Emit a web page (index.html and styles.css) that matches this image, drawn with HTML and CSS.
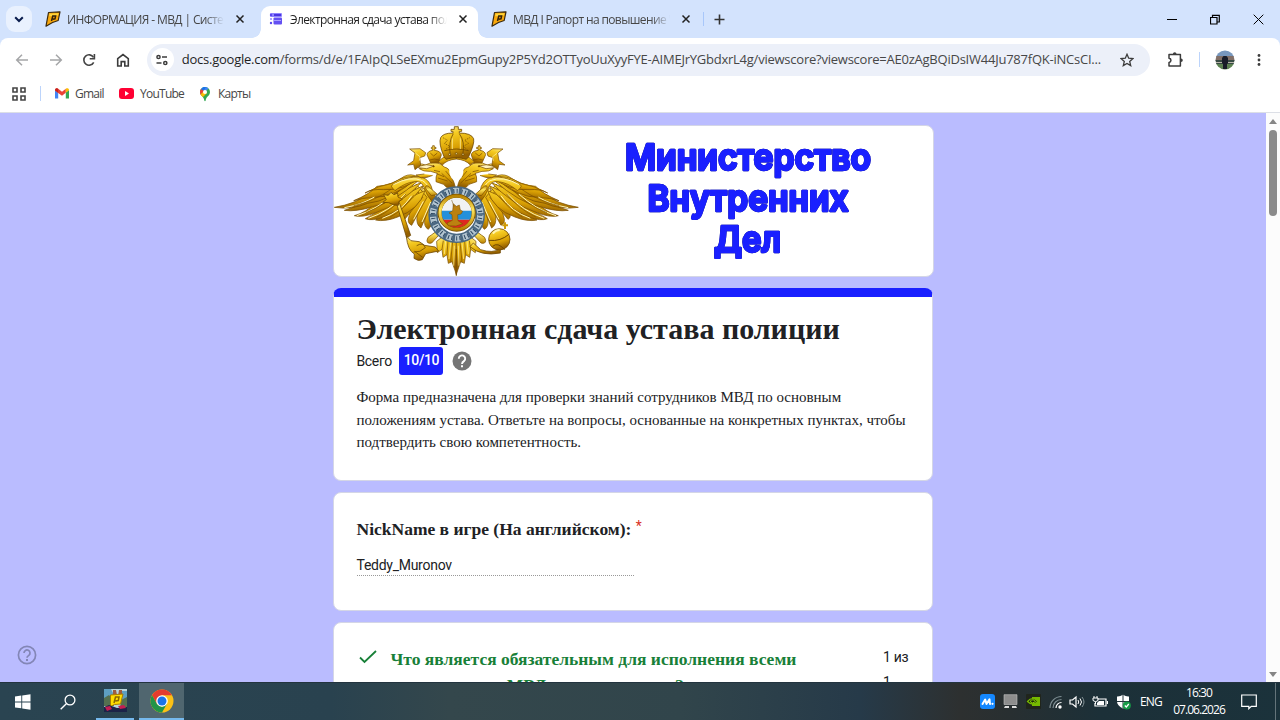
FILE: index.html
```html
<!DOCTYPE html>
<html lang="ru">
<head>
    <meta charset="UTF-8">
    <title>Электронная сдача устава полиции</title>
    <link rel="stylesheet" href="styles.css">
</head>
<body>
    <svg class="defs" width="0" height="0">
        <defs>
            <symbol id="rp" viewBox="0 0 16 16">
                <path d="M3.5 1.5L15 .8 13.2 9.5 7.5 11.5 1 15.2z" fill="#f9a80c" stroke="#3a2a10" stroke-width="1.2" stroke-linejoin="round"/>
                <path d="M4.5 2.8l9-.6-.5 2.2-8.8.8z" fill="#ffd43a"/>
                <path d="M6.500 10L7.800 5h2.800L10 7.800 7.800 8.300" fill="none" stroke="#33220c" stroke-width="1.500"/>
            </symbol>
            <symbol id="x" viewBox="0 0 10 10">
                <path d="M1.5 1.5l7 7M8.5 1.5l-7 7" stroke="currentColor" stroke-width="1.5"/>
            </symbol>
        </defs>
    </svg>

    <!-- Вкладки -->
    <div class="tabs">
        <div class="tab-search"><svg width="10" height="7" viewBox="0 0 10 7"><path d="M1.2 1.2L5 5l3.8-3.8" fill="none" stroke="#0b1d4d" stroke-width="2"/></svg></div>
        <div class="tab tab-first">
            <svg width="16" height="16"><use href="#rp"/></svg>
            <span class="tab-title">ИНФОРМАЦИЯ - МВД | Система</span>
            <svg class="close" width="10" height="10"><use href="#x"/></svg>
        </div>
        <div class="tab active">
            <svg width="14" height="14" viewBox="0 0 14 14">
                <rect x="1" y="1" width="12" height="4" rx="1" fill="#8f84ff"/><rect x="5" y="2" width="7" height="2" fill="#4b35e0"/>
                <rect x="4.500" y="5.500" width="8.500" height="7" rx="1" fill="#6350f2"/><circle cx="2" cy="3" r="1.200" fill="#5b45ee"/>
                <circle cx="2" cy="7" r="1" fill="#8f84ff"/><circle cx="2" cy="11" r="1.200" fill="#5b45ee"/><path d="M5 8.500h7" stroke="#a79fff"/>
            </svg>
            <span class="tab-title">Электронная сдача устава полиции</span>
            <svg class="close" width="10" height="10"><use href="#x"/></svg>
        </div>
        <div class="tab tab-last">
            <svg width="16" height="16"><use href="#rp"/></svg>
            <span class="tab-title">МВД I Рапорт на повышение "М</span>
            <svg class="close" width="10" height="10"><use href="#x"/></svg>
        </div>
        <div class="tab-line"></div>
        <svg class="plus" width="11" height="11" viewBox="0 0 11 11"><path d="M5.500 .5v10M.5 5.500h10" stroke="#333" stroke-width="1.600"/></svg>
        <div class="window-buttons">
            <svg width="10" height="11" viewBox="0 0 10 11"><path d="M0 5.500h10" stroke="#000"/></svg>
            <svg width="10" height="11" viewBox="0 0 10 11"><path d="M.500 3.500h6.500v6.500h-6.500zM2.500 3.500V1.300h6.800V8H7" fill="none" stroke="#000" stroke-width="1.200"/></svg>
            <svg width="11" height="11" viewBox="0 0 11 11"><path d="M.7.7l9.600 9.600M10.300.7L.7 10.300" stroke="#000"/></svg>
        </div>
    </div>

    <!-- Адресная строка -->
    <div class="toolbar-wrap">
        <div class="toolbar">
            <svg class="nav" width="14" height="14" viewBox="0 0 14 14"><path d="M13 7H2M7 1.700L1.700 7 7 12.300" fill="none" stroke="#a5a6a8" stroke-width="1.500"/></svg>
            <svg class="nav" width="14" height="14" viewBox="0 0 14 14"><path d="M1 7h11M7 1.700L12.300 7 7 12.300" fill="none" stroke="#a5a6a8" stroke-width="1.500"/></svg>
            <svg class="nav" width="14" height="14" viewBox="0 0 14 14"><path d="M11.700 9.300A5.200 5.200 0 1 1 11.500 4.300" fill="none" stroke="#444" stroke-width="1.600"/><path d="M12.400 1v4.800H7.700" fill="none" stroke="#444" stroke-width="1.600"/></svg>
            <svg class="nav" width="14" height="14" viewBox="0 0 14 14"><path d="M1.700 13V5.600L7 1.500l5.300 4.100V13H8.800V8.600H5.200V13z" fill="none" stroke="#3c3c3c" stroke-width="1.600"/></svg>
            <div class="address">
                <div class="site-info"><svg width="12" height="12" viewBox="0 0 12 12"><g fill="none" stroke="#3c3c3c" stroke-width="1.500"><circle cx="2.500" cy="3" r="1.600"/><path d="M6 3h5M.5 9h5"/><circle cx="9.300" cy="9" r="1.600"/></g></svg></div>
                <div class="url"><b>docs.google.com</b>/forms/d/e/1FAIpQLSeEXmu2EpmGupy2P5Yd2OTTyoUuXyyFYE-AIMEJrYGbdxrL4g/viewscore?viewscore=AE0zAgBQiDsIW44Ju787fQK-iNCsCI...</div>
                <svg class="star" width="14" height="14" viewBox="0 0 14 14"><path d="M7 1.300l1.700 3.900 4.200.4-3.200 2.800 1 4.200L7 10.400l-3.700 2.200 1-4.200L1.100 5.600l4.200-.4z" fill="none" stroke="#3c3c3c" stroke-width="1.300"/></svg>
            </div>
            <svg class="puzzle" width="17" height="17" viewBox="0 0 17 17"><path d="M2 3.600h11.400v11.400H2v-3.600c2.600-.3 2.600-3.900 0-4.200z" fill="none" stroke="#3c3c3c" stroke-width="1.500" stroke-linejoin="round"/><path d="M5.900 3a1.800 1.800 0 0 1 3.600 0M14 7.500a1.800 1.800 0 0 1 0 3.600" fill="#3c3c3c"/></svg>
            <div class="bar-line"></div>
            <svg class="avatar" width="20" height="20" viewBox="0 0 20 20">
                <clipPath id="round"><circle cx="10" cy="10" r="9.500"/></clipPath>
                <g clip-path="url(#round)"><path fill="#7897bd" d="M0 0h20v7H0z"/><path fill="#826f67" d="M0 6h20v5H0z"/><path fill="#374a43" d="M0 10h20v4H0z"/><path fill="#5c8151" d="M0 14h20v6H0z"/><path fill="#bbb7ad" d="M0 12h20v1H0z"/><path fill="#191d29" d="M8.500 6h3l1.500 2v5L12 14v5H8v-5l-1-1V8z"/></g>
            </svg>
            <svg class="dots" width="4" height="14" viewBox="0 0 4 14" fill="#3c3c3c"><circle cx="2" cy="2.500" r="1.400"/><circle cx="2" cy="7" r="1.400"/><circle cx="2" cy="11.500" r="1.400"/></svg>
        </div>
    </div>

    <div class="bookmarks">
        <svg width="14" height="14" viewBox="0 0 14 14"><path d="M1 1h4v4H1zM9 1h4v4H9zM1 9h4v4H1zM9 9h4v4H9z" fill="none" stroke="#444" stroke-width="1.600"/></svg>
        <div class="bar-line"></div>
        <div class="bookmark gmail"><svg width="14" height="11" viewBox="0 0 14 11"><path d="M0 2v8.500h3.200V4.500z" fill="#4285f4"/><path d="M14 2v8.500h-3.200V4.500z" fill="#34a853"/><path d="M0 2.200C0 .2 2 0 3.200.8L7 3.700 10.800.8v4L7 7.700 0 2.700z" fill="#ea4335"/><path d="M10.800.8C12 0 14 .2 14 2.200l-3.200 2.600z" fill="#fbbc04"/><path d="M0 2.200C0 1 1 .2 2 .3L3.200 1v3.800z" fill="#c5221f"/></svg><span>Gmail</span></div>
        <div class="bookmark youtube"><svg width="15" height="11" viewBox="0 0 15 11"><rect width="15" height="11" rx="3" fill="#ff0033"/><path d="M6 3v5l4-2.500z" fill="#fff"/></svg><span>YouTube</span></div>
        <div class="bookmark maps"><svg width="12" height="16" viewBox="0 0 12 16"><clipPath id="pin"><path d="M6 1a5 5 0 0 1 5 5c0 4-4 4.500-4.300 8.500Q6 16 5.300 14.500C5 10.500 1 10 1 6a5 5 0 0 1 5-5z"/></clipPath><g clip-path="url(#pin)"><path fill="#34a853" d="M0 0h12v16H0z"/><path fill="#4285f4" d="M3 0h9L6 6z"/><path fill="#1a73e8" d="M2 1h5L4 6 1 4z"/><path fill="#ea4335" d="M0 2l5 3-4 5z"/><path fill="#fbbc04" d="M1 9l5-5 2 3-5 5z"/></g><circle cx="6" cy="6" r="2" fill="#fff"/></svg><span>Карты</span></div>
    </div>

    <!-- Форма -->
    <div class="page">
        <div class="form">
            <div class="banner">
                <svg width="600" height="150" viewBox="0 0 600 150">
                    <defs>
                        <linearGradient id="gold" x1="0" y1="0" x2=".3" y2="1"><stop offset="0" stop-color="#fff3a0"/><stop offset=".3" stop-color="#f5cb22"/><stop offset=".7" stop-color="#d9a004"/><stop offset="1" stop-color="#945f00"/></linearGradient>
                        <linearGradient id="gold2" x1="0" y1="0" x2="0" y2="1"><stop offset="0" stop-color="#b98300"/><stop offset=".4" stop-color="#ffe65c"/><stop offset="1" stop-color="#ba8000"/></linearGradient>
                        <g id="half" stroke="#7d5000" stroke-width="2.200" stroke-linejoin="round" fill="url(#gold)">
                            <!-- хвост -->
                            <path d="M350 365l-15 12 2 34 14-10 3 24 12-8 4 26 11-5 13 38V360z"/>
                            <path d="M355 375l-4 26M369 376l-3 41M383 378l-6 60M394 400v80" fill="none"/>
                            <path d="M362 375l-4 40M377 380l-5 50M388 390l-2 60" fill="none" stroke="#fff09a"/>
                            <!-- внутренние перья -->
                            <path d="M316 235l28 62-34 44q-15-8-10-32z"/>
                            <path d="M292 215l34 32-38 90q-15-10-12-34z"/>
                            <path d="M274 205l32 40-46 84q-16-7-7-30z"/>
                            <path d="M255 200l38 45-54 66q-14-8 0-27z"/>
                            <!-- маховые перья -->
                            <path d="M300 225q-18 57-82 79-37 15-66 9 32-16 58-49z"/>
                            <path d="M295 210q-51 68-119 94-35 13-55 5 34-15 62-45z"/>
                            <path d="M290 200q-62 65-135 90-44 17-67 10 36-10 63-38z"/>
                            <path d="M282 193q-79 70-139 80-50 16-85 11 52-15 78-40z"/>
                            <path d="M278 187q-88 71-150 76-47 20-100 12 65-11 95-37z"/>
                            <path d="M280 184q-73 63-132 61-38 2-62 10 45-18 70-43 43-3 82-30 20-10 42 2z"/>
                            <path d="M287 184q-53 42-111 38-36-3-56 10 39-22 82-29 38-27 85-19z"/>
                            <path d="M200 209q43-29 89-25 29 9 34 44l14 23-8 17q-25-28-34-57-7-16-27-13-29 3-58 27-15-15-10-16z"/>
                            <g fill="none" stroke="#fff6b8" stroke-width="3"><path d="M58 276q55-10 90-32M95 300q60-18 111-65M130 308q62-20 111-73M172 308q57-20 88-68M205 207q50-28 88-12 17 10 23 35M266 311l29-54M291 319l26-60"/></g>
                            <g fill="none" stroke-width="2"><path d="M86 270q63-14 112-49M122 291q59-22 103-68M155 304q50-22 88-69M195 304q43-22 71-65"/></g>
                            <!-- шея и голова -->
                            <path d="M394 225q-28-4-38-19l-23-8q-1-16 4-25l-20-6q-23 1-34-8l24-8q-20 0-30-4 15-5 24 1l15-6q21-8 42 12 18 4 21 26 9 20 15 45z"/>
                            <path d="M327 164l18 4M335 174l22 9M339 187l29 9M350 173l31 29M362 166l16 19" fill="none"/>
                            <path d="M285 151q18-8 42 0l-22 8-25-3z" fill="#fff2bd"/><circle cx="326" cy="152" r="2" fill="#332000"/>
                            <path d="M298 175l-25 3 16 9q17 0 34-8" />
                            <!-- ленты -->
                            <path d="M302 111l-17-12-31 1 16 12-4 23-18 13 18-2 4 16 17-14-3-22 15-5z"/>
                            <path d="M271 112l14 11-2 12" fill="none" stroke="#fff09a"/>
                            <!-- малая корона -->
                            <path d="M317 142l-11-25q2-11 17-13v-5h-4v-4h4v-5h5v5h5v4h-5v5q20 2 21 14l-8 24z"/>
                            <path d="M314 133q14-6 29 0M316 112l10 9 11-9" fill="none"/>
                            <path d="M340 138q21-22 54-25v17q-28 2-42 18z"/>
                            <!-- рукояти -->
                            <path d="M319 240l-16-20q-5-10 5-10l29 26z" fill="url(#gold2)"/>
                            <path d="M348 337l-29 21q-13 6-13 16 0 12 14 8l20-22 25-12z" fill="url(#gold2)"/>
                        </g>
                    </defs>
                    <g transform="translate(-9 -10.300) scale(.3333)">
                        <use href="#half"/>
                        <use href="#half" transform="translate(788 0) scale(-1 1)"/>
                        <path d="M394 136l18 14q8 20-3 36l-15 16-15-16q-11-16-3-36z" fill="#fff"/>
                        <!-- большая корона -->
                        <g fill="url(#gold)" stroke="#6d4600" stroke-width="2.400">
                            <path d="M357 123q-17-41-10-57 7-14 37-14v-5h-6v-6h10v-8h12v8h10v6h-7v5q36 0 43 17 3 16-15 54l-7 8q-31-10-61 0z"/>
                            <path d="M385 54q-15 22-9 66M403 54q18 22 10 66M358 105q36-10 73 0" fill="none"/>
                            <path d="M354 66l14 8-10 9 17 9-13 9M434 66l-15 8 12 9-17 9 13 9" fill="none" stroke-dasharray="3 3"/>
                            <circle cx="374" cy="116" r="3" fill="#fff2a7"/><circle cx="394" cy="114" r="3" fill="#fff2a7"/><circle cx="414" cy="116" r="3" fill="#fff2a7"/>
                            <path d="M382 68v32M406 68v32" stroke="#fff09a"/>
                        </g>
                        <!-- скипетр и держава -->
                        <g fill="url(#gold)" stroke="#6d4600" stroke-width="2.400">
                            <path d="M215 264l8-3 34 98-12 8z"/>
                            <path d="M208 268l-17-7-18-1 11-8-8-15 14 2 8-9 9 7 11-5 1 12 13 7-10 6-2 12z"/>
                            <path d="M244 361l14 14 25 3 16 11 32 5 10 12-39 8-10 18q-13 6-25-4l1-13q-20-11-24-54z"/>
                            <path d="M275 390q20-12 26 6-15 15-35 13M269 407l24 18" fill="none"/>
                            <path d="M445 382l22 20q37 12 59-3v13q-57 11-91-19z"/>
                            <circle cx="523" cy="371" r="32"/><path d="M492 374q35 4 61-19M503 392q15-14 36 10" fill="none" stroke-width="3"/><path d="M540 320v20M532 329h17" stroke="#cf9b08" stroke-width="6"/><path d="M504 354q8-11 20-11" stroke="#fff4b0" stroke-width="6" fill="none"/>
                        </g>
                        <!-- щит -->
                        <circle cx="395" cy="297" r="71" fill="none" stroke="#4a6882" stroke-width="28"/>
                        <circle cx="395" cy="297" r="71" fill="none" stroke="#b3c5d0" stroke-width="19" stroke-dasharray="17 7.800"/>
                        <circle cx="395" cy="297" r="71" fill="none" stroke="#2c4761" stroke-width="13" stroke-dasharray="3 7 3 11.800"/>
                        <circle cx="395" cy="291" r="50" fill="none" stroke="#765000" stroke-width="14"/>
                        <clipPath id="flag"><circle cx="395" cy="291" r="45"/></clipPath>
                        <g clip-path="url(#flag)"><path d="M345 240h98v46h-98z" fill="#f1f2f2"/><path d="M345 285h98v27h-98z" fill="#2490da"/><path d="M345 312h98v30h-98z" fill="#df281f"/></g>
                        <circle cx="395" cy="291" r="50" fill="none" stroke="url(#gold2)" stroke-width="9"/>
                        <path d="M385 264l9 8 9-4 3 15 7 4-5 8-10 2 1 18 14 9-20 7-23-1-4-8 16-8-1-17-9-5 11-7zM380 253l7 20" fill="#bc8110" stroke="#744900" stroke-width="1.500"/>
                    </g>
                    <g class="banner-text">
                        <text x="414" y="43.500" textLength="246" lengthAdjust="spacingAndGlyphs">Министерство</text>
                        <text x="414" y="84.500" textLength="201" lengthAdjust="spacingAndGlyphs">Внутренних</text>
                        <text x="413.500" y="125.500" textLength="67" lengthAdjust="spacingAndGlyphs">Дел</text>
                    </g>
                </svg>
            </div>

            <div class="card intro">
                <h1>Электронная сдача устава полиции</h1>
                <div class="score">
                    <span>Всего</span>
                    <span class="points">10/10</span>
                    <svg width="20" height="20" viewBox="0 0 20 20"><circle cx="10" cy="10" r="9.500" fill="#757575"/><path d="M6.800 7.700a3.200 3.200 0 1 1 5.400 2.200Q10 11.400 10 12.900" fill="none" stroke="#fff" stroke-width="1.900"/><path d="M9 14.300h2v2H9z" fill="#fff"/></svg>
                </div>
                <p>Форма предназначена для проверки знаний сотрудников МВД по основным<br>положениям устава. Ответьте на вопросы, основанные на конкретных пунктах, чтобы<br>подтвердить свою компетентность.</p>
            </div>

            <div class="card nickname">
                <h2>NickName в игре (На английском): <span>*</span></h2>
                <div class="answer">Teddy_Muronov</div>
            </div>

            <div class="card question">
                <svg class="check" width="18" height="14" viewBox="0 0 18 14"><path d="M1 7.500l4.500 4.500L17 1" fill="none" stroke="#188038" stroke-width="1.800"/></svg>
                <h2>Что является обязательным для исполнения всеми<br>сотрудниками МВД согласно уставу?</h2>
                <div class="mark">1 из<br>1</div>
            </div>
        </div>

        <svg class="help" width="20" height="20" viewBox="0 0 20 20"><circle cx="10" cy="10" r="8.600" fill="none" stroke="#8386b6" stroke-width="1.700"/><path d="M7 8a3 3 0 1 1 4.800 2.400Q10 11.600 10 12.800" fill="none" stroke="#8386b6" stroke-width="1.700"/><path d="M9 14h2v2H9z" fill="#8386b6"/></svg>

        <div class="scrollbar">
            <svg width="8" height="5" viewBox="0 0 8 5"><path d="M4 0l4 5H0z" fill="#858585"/></svg>
            <div class="thumb"></div>
            <svg class="down" width="8" height="5" viewBox="0 0 8 5"><path d="M0 0h8L4 5z" fill="#858585"/></svg>
        </div>
    </div>

    <!-- Панель задач -->
    <div class="taskbar">
        <div class="task"><svg width="16" height="16" viewBox="0 0 16 16" fill="#fff"><path d="M0 2.500L6.300 1.600v5.900H0zM7.200 1.400L15.500.2v7.300H7.200zM0 8.400h6.300v5.900L0 13.400zM7.200 8.400h8.300v7.300l-8.300-1.200z"/></svg></div>
        <div class="task"><svg width="16" height="16" viewBox="0 0 16 16"><circle cx="10" cy="6" r="4.900" fill="none" stroke="#fff" stroke-width="1.300"/><path d="M6.300 9.700L.7 15.200" stroke="#fff" stroke-width="1.400"/></svg></div>
        <div class="task open"><svg width="23" height="23" viewBox="0 0 23 23"><path fill="#b9d4dc" d="M0 0h23v23H0z"/><path fill="#5e9fc1" d="M0 0h7l3 6-5 5-5-2zM16 2h7v10h-6z"/><path fill="#557050" d="M0 9l5-3 5 6v5H0zM17 11l6-3v11h-7z"/><path d="M9 1h3l1 5H9zM15 1h3v6h-4z" fill="#9d5d42"/><path d="M6.500 6L19 5l-2.500 10-6 .5-4 2z" fill="#ffdc00" stroke="#a77b00"/><path d="M10 14l1.500-6H15l-.7 3.500-3 .5" fill="none" stroke="#8b6800" stroke-width="1.500"/><path fill="#1c2348" d="M0 18l5-2 8 3 10-1v5H0z"/><path fill="#c51e52" d="M1 18l5-1 2 3-5 2zM14 17l6-1 2 3-6 1z"/></svg></div>
        <div class="task chrome"><svg width="24" height="24" viewBox="0 0 24 24"><circle cx="12" cy="12" r="11.500" fill="#fbc116"/><path d="M2.040 6.250A11.500 11.500 0 0 1 21.960 6.250H12L7 15z" fill="#e33b2e"/><path d="M2.040 6.250A11.500 11.500 0 0 0 12 23.500L17 14.800 12 17.700 7 14.900z" fill="#219447"/><circle cx="12" cy="12" r="5.800" fill="#fff"/><circle cx="12" cy="12" r="4.500" fill="#1a73e8"/></svg></div>

        <div class="tray">
            <svg width="15" height="15" viewBox="0 0 15 15"><rect width="15" height="15" rx="3" fill="#1588ff"/><path d="M2.500 10l2.700-4.500L6.500 10l3-4.700L10 10" fill="none" stroke="#fff" stroke-width="2" stroke-linejoin="round" stroke-linecap="round"/><circle cx="12.500" cy="9.800" r="1.100" fill="#fff"/></svg>
            <svg width="15" height="15" viewBox="0 0 15 15"><path d="M1 .7h13v9.800H1z" fill="#8d8d8d" stroke="#c5c5c5" stroke-width=".6"/><path d="M1 14h5v-2H2zM9 14h5l-1-2H9z" fill="#ddd"/></svg>
            <svg width="15" height="15" viewBox="0 0 15 15"><rect width="15" height="15" rx="1" fill="#20251c"/><path d="M6 3h8v9H6z" fill="#76b900"/><path d="M1.500 7.500Q6.500 1.500 12 7.500q-5.500 5-10.500 0z" fill="#1d280e" stroke="#76b900" stroke-width="1.200"/><path d="M4 7.500q3-3.500 5.500 0-3 3-5.500 0z" fill="none" stroke="#8bd600"/></svg>
            <svg class="wifi" width="14" height="14" viewBox="0 0 14 14"><g fill="none" stroke="#7e8e93" stroke-width="1.200"><path d="M1 13A11.500 11.500 0 0 1 12.500 1.500M4 13a8.500 8.500 0 0 1 8.500-8.500"/><path d="M7 13a5.500 5.500 0 0 1 5.500-5.500" stroke="#fff"/></g><circle cx="11" cy="12" r="1.700" fill="#fff"/></svg>
            <svg class="volume" width="16" height="14" viewBox="0 0 16 14"><path d="M1 5h2.500L7 2v10L3.500 9H1z" fill="none" stroke="#fff" stroke-width="1.200"/><path d="M9 5q1.500 2 0 4M11 3.500q3 3.500 0 7" fill="none" stroke="#fff"/><path d="M13 2q4 5 0 10" fill="none" stroke="#849297"/></svg>
            <svg width="16" height="14" viewBox="0 0 16 14"><path d="M5.500 4H14v7H3V8M15.500 6v3" fill="none" stroke="#fff" stroke-width="1.200"/><path d="M7 6h5v4H5V8z" fill="#fff"/><path d="M1 3h5v2.500Q3.500 8 1 5.500zM2 1v2M5 1v2M3.500 6.500V9" fill="none" stroke="#fff"/></svg>
            <svg width="15" height="16" viewBox="0 0 15 16"><path d="M7 .8q3 2 6 1.700v5q0 4-6 7-6-3-6-7v-5q3 .3 6-1.700z" fill="#fff"/><path d="M7 1v13M1 7.500h12" stroke="#23353b"/><circle cx="10.800" cy="11.500" r="4" fill="#169b46"/><path d="M8.800 11.500l1.500 1.500 2.500-3" stroke="#fff" fill="none" stroke-width="1.200"/></svg>
            <span class="lang">ENG</span>
            <div class="clock">16:30<br>07.06.2026</div>
            <svg class="notice" width="16" height="16" viewBox="0 0 16 16"><path d="M.7 1h14.600v11.300h-5L7.800 14.700v-2.400H.7z" fill="none" stroke="#fff" stroke-width="1.200"/></svg>
        </div>
    </div>
</body>
</html>
```
FILE: styles.css
```css
* {
    box-sizing: border-box;
}

body {
    margin: 0;
    width: 1280px;
    height: 720px;
    overflow: hidden;
    display: flex;
    flex-direction: column;
    font-family: 'Open Sans', sans-serif;
    color: #202124;
    background: #fff;
}

svg {
    display: block;
    flex-shrink: 0;
}

.defs {
    position: absolute;
}

/* вкладки */
.tabs {
    height: 38px;
    background: #d3e3fd;
    display: flex;
    align-items: center;
    flex-shrink: 0;
}

.tab-search {
    width: 26px;
    height: 26px;
    margin-left: 6px;
    border-radius: 9px;
    background: #e9f1fe;
    display: flex;
    align-items: center;
    justify-content: center;
}

.tab {
    height: 32px;
    display: flex;
    align-items: center;
    color: #474747;
}

.tab-first {
    width: 229px;
    padding-left: 13px;
}

.tab.active {
    width: 217px;
    height: 32px;
    align-self: flex-end;
    padding: 0 0 6px 8px;
    background: #fff;
    border-radius: 9px 9px 0 0;
    color: #1f1f1f;
    position: relative;
}

.tab.active::before,
.tab.active::after {
    content: '';
    position: absolute;
    bottom: 0;
    width: 9px;
    height: 9px;
}

.tab.active::before {
    left: -9px;
    background: radial-gradient(circle at 0 0, transparent 8.5px, #fff 9px);
}

.tab.active::after {
    right: -9px;
    background: radial-gradient(circle at 9px 0, transparent 8.5px, #fff 9px);
}

.tab-last {
    width: 225px;
    padding-left: 13px;
}

.tab-title {
    font-size: 12px;
    line-height: 20px;
    letter-spacing: -0.62px;
    white-space: nowrap;
    overflow: hidden;
    width: 157px;
    margin-left: 6px;
    padding-top: 1px;
    -webkit-mask-image: linear-gradient(90deg, #000 88%, transparent);
    mask-image: linear-gradient(90deg, #000 88%, transparent);
}

.active .tab-title {
    margin-left: 7px;
}

.close {
    margin-left: 11px;
    color: #222;
}

.tab-line {
    width: 1px;
    height: 14px;
    background: #a8c7fa;
}

.plus {
    margin-left: 10px;
}

.window-buttons {
    margin-left: auto;
    padding-right: 16px;
    display: flex;
    gap: 33px;
}

/* адресная строка */
.toolbar-wrap {
    height: 43px;
    background: #d3e3fd;
    flex-shrink: 0;
}

.toolbar {
    height: 43px;
    display: flex;
    align-items: center;
    padding-left: 15px;
    background: #fff;
    border-radius: 8px 8px 0 0;
}

.nav {
    margin-right: 19.7px;
}

.address {
    width: 1003px;
    height: 32px;
    margin-left: -3px;
    border-radius: 16px;
    background: #ecf0f9;
    display: flex;
    align-items: center;
    padding: 0 16px 0 4px;
}

.site-info {
    width: 23px;
    height: 23px;
    border-radius: 50%;
    background: #fff;
    display: flex;
    align-items: center;
    justify-content: center;
}

.url {
    width: 935px;
    padding: 0 0 1px 8px;
    font-size: 13px;
    letter-spacing: -0.235px;
    color: #474747;
    white-space: nowrap;
}

.url b {
    font-weight: 400;
    color: #1f1f1f;
}

.star {
    margin-left: auto;
}

.puzzle {
    margin-left: 17px;
}

.bar-line {
    width: 1px;
    height: 15px;
    background: #bcd4fb;
}

.toolbar .bar-line {
    margin-left: 15px;
}

.avatar {
    margin-left: 15px;
}

.dots {
    margin-left: 22px;
}

/* закладки */
.bookmarks {
    height: 32px;
    border-bottom: 1px solid #dcdfe6;
    display: flex;
    align-items: center;
    padding: 0 0 6px 12px;
    flex-shrink: 0;
    font-size: 12px;
    color: #474747;
}

.bookmarks .bar-line {
    margin: 0 14px;
}

.bookmark {
    display: flex;
    align-items: center;
    letter-spacing: -0.75px;
}

.bookmark span {
    margin-left: 6px;
}

.gmail {
    width: 64px;
}

.youtube {
    width: 80px;
}

.maps span {
    margin-left: 7px;
}

/* страница */
.page {
    height: 569px;
    background: #babcff;
    position: relative;
    display: flex;
    justify-content: center;
    padding-right: 13px;
    overflow: hidden;
    flex-shrink: 0;
}

.form {
    width: 601px;
    padding-top: 12px;
}

.banner,
.card {
    background: #fff;
    border: 1px solid #d4d6e6;
    border-radius: 8px;
    margin-bottom: 11px;
}

.banner {
    height: 152px;
    overflow: hidden;
}

.banner-text {
    font-family: Inter, sans-serif;
    font-size: 36px;
    font-weight: 600;
    text-anchor: middle;
    fill: #1a20ff;
    stroke: #1a20ff;
    stroke-width: 2.5px;
    stroke-linejoin: round;
    filter: drop-shadow(0.4px 0.5px 0.4px #000060);
}

.card {
    width: 600px;
}

.intro {
    height: 193px;
    padding: 15px 22.5px;
    border-top: 9px solid #1a20ff;
}

.intro h1 {
    margin: 0;
    font-family: 'Liberation Serif', serif;
    font-size: 30px;
    line-height: 34px;
    white-space: nowrap;
}

.score {
    display: flex;
    align-items: center;
    margin-top: 1px;
    font-family: Roboto, sans-serif;
    font-size: 14px;
    letter-spacing: -0.35px;
    height: 28px;
}

.points {
    width: 44px;
    height: 28px;
    line-height: 27px;
    margin: 0 9px 0 7.5px;
    background: #1a20ff;
    color: #fff;
    border-radius: 3px;
    text-align: center;
    font-weight: 500;
}

.intro p {
    margin: 11px 0 0;
    font-family: 'Liberation Serif', serif;
    font-size: 15px;
    line-height: 22.5px;
    white-space: nowrap;
}

.card h2 {
    margin: 0;
    font-family: 'Liberation Serif', serif;
    font-size: 17.5px;
    line-height: 26px;
    white-space: nowrap;
}

.nickname {
    height: 119px;
    padding: 22.5px;
}

.nickname h2 span {
    font: 14px Roboto, sans-serif;
    color: #d93025;
    vertical-align: 4px;
    line-height: 14px;
}

.answer {
    width: 277px;
    margin-top: 13px;
    font-family: Roboto, sans-serif;
    font-size: 14px;
    letter-spacing: -0.27px;
    line-height: 20px;
    border-bottom: 1px dotted #999;
}

.question {
    height: 160px;
    padding: 23px 22px 0 25px;
    display: flex;
    align-items: flex-start;
}

.question h2 {
    margin-left: 13.5px;
    color: #188038;
}

.check {
    margin-top: 4px;
}

.mark {
    width: 27px;
    margin-left: auto;
    margin-top: -1px;
    font-family: Roboto, sans-serif;
    font-size: 14px;
    letter-spacing: -0.3px;
    line-height: 25px;
}

.help {
    position: absolute;
    left: 17px;
    bottom: 17px;
}

.scrollbar {
    position: absolute;
    top: 0;
    right: 0;
    width: 14px;
    height: 100%;
    background: #fcfcfc;
    display: flex;
    flex-direction: column;
    align-items: center;
    padding: 6px 0 5px;
}

.thumb {
    width: 8px;
    height: 86px;
    margin-top: 6px;
    border-radius: 4px;
    background: #8b8b8b;
}

.down {
    margin-top: auto;
}

/* панель задач */
.taskbar {
    height: 38px;
    display: flex;
    flex-shrink: 0;
    border-top: 1px solid #23343f;
    background: linear-gradient(90deg, #2a4451 0, #29424f 330px, #34474c 450px, #31454b 680px, #263a49 860px, #2d3030 960px, #282f31 1010px, #1c3038 1100px, #1b323b 100%);
}

.task {
    width: 45px;
    display: flex;
    align-items: center;
    justify-content: center;
}

.task.open {
    width: 38px;
    margin-left: 6px;
    border-bottom: 2px solid #76b9ed;
}

.task.chrome {
    margin-left: 5px;
    background: #50666f;
    border-bottom: 2px solid #76b9ed;
}

.tray {
    margin-left: auto;
    padding-right: 18px;
    display: flex;
    align-items: center;
    gap: 8px;
    color: #fff;
    font-size: 12px;
    border-right: 1px solid #64747a;
    margin-right: 4px;
}

.wifi {
    margin-right: -2px;
}

.volume {
    margin-right: -1px;
}

.lang {
    margin-left: 1px;
    letter-spacing: -0.8px;
}

.clock {
    width: 54px;
    margin-left: 2px;
    padding-bottom: 2px;
    line-height: 17px;
    font-size: 12px;
    letter-spacing: -0.95px;
    text-align: center;
    white-space: nowrap;
}

.notice {
    margin-left: 7px;
}
```
